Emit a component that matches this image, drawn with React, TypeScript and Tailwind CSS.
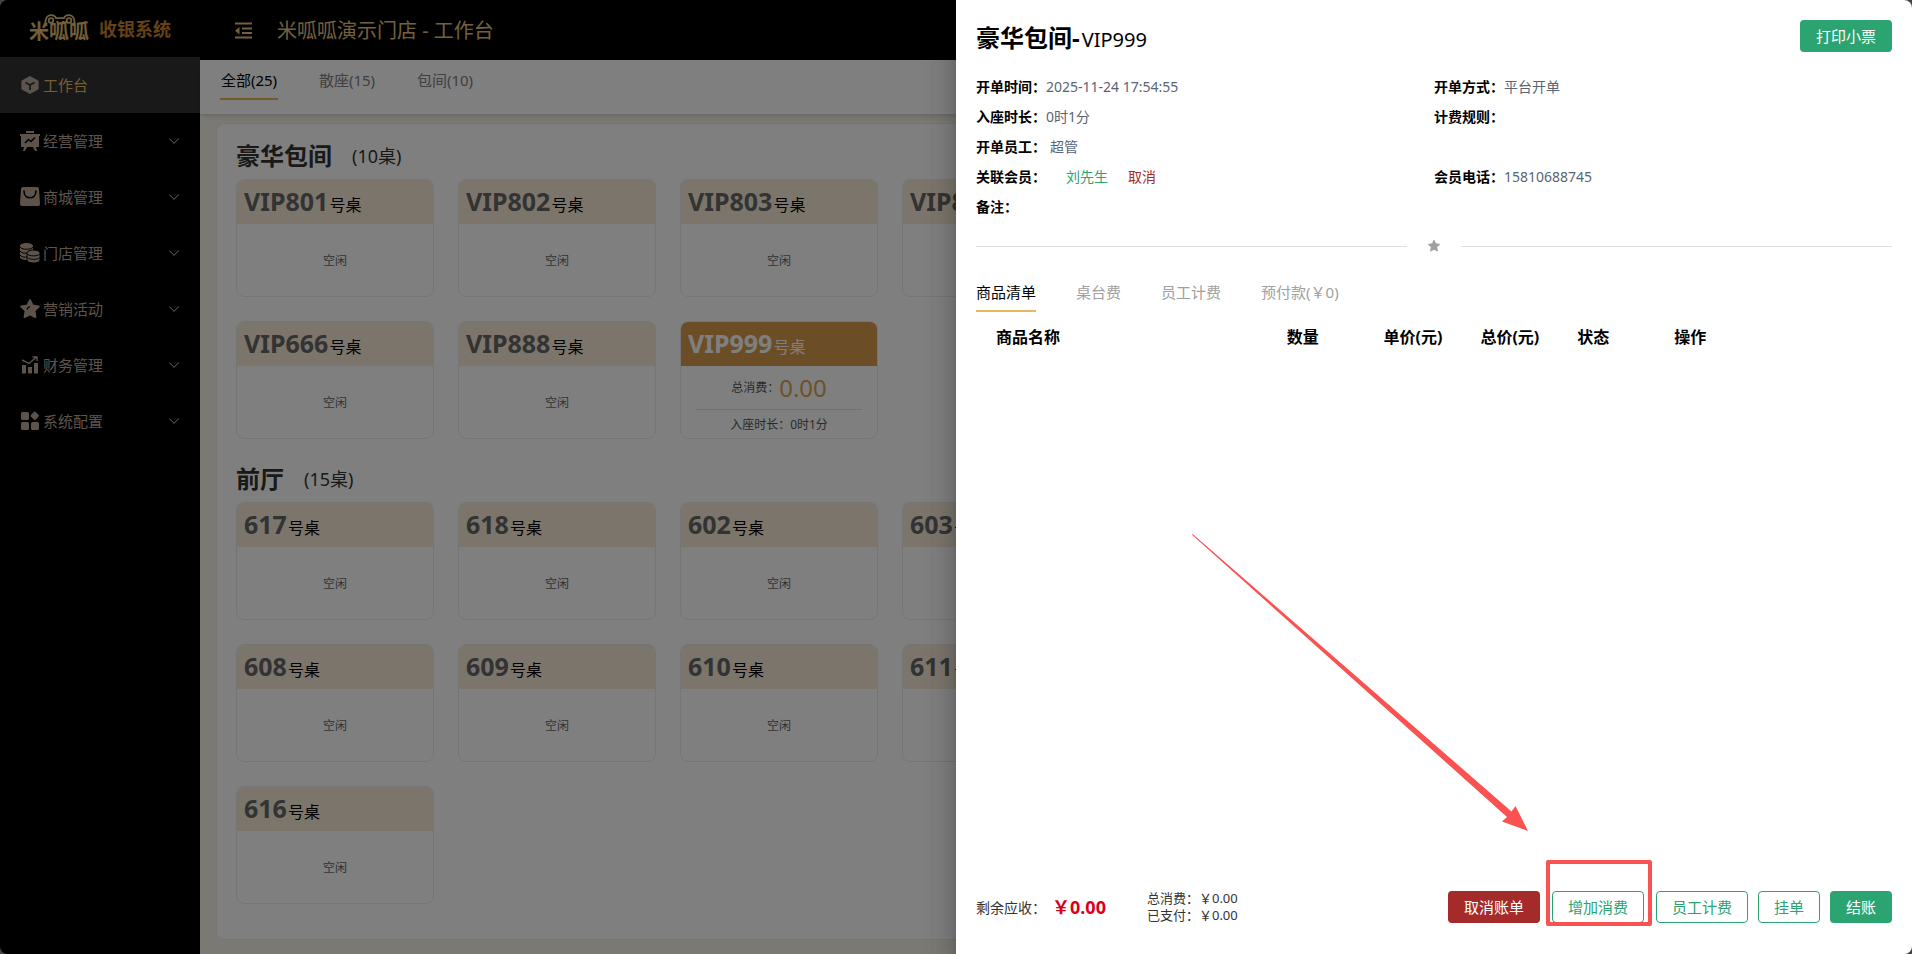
import React from 'react';
import { ChevronDown } from 'lucide-react';

interface Table {
  name: string;
  amount?: string;
  duration?: string;
}

interface Area {
  title: string;
  tables: Table[];
}

const areas: Area[] = [
  {
    title: '豪华包间',
    tables: [
      { name: 'VIP801' },
      { name: 'VIP802' },
      { name: 'VIP803' },
      { name: 'VIP805' },
      { name: 'VIP806' },
      { name: 'VIP807' },
      { name: 'VIP808' },
      { name: 'VIP666' },
      { name: 'VIP888' },
      { name: 'VIP999', amount: '0.00', duration: '0时1分' },
    ],
  },
  {
    title: '前厅',
    tables: [
      '617', '618', '602', '603', '604', '605', '606',
      '608', '609', '610', '611', '612', '613', '615',
      '616',
    ].map((name) => ({ name })),
  },
];

const icons: Record<string, React.ReactNode> = {
  desk: (
    <>
      <path d="M10 1 17.8 5.2a1.6 1.6 0 0 1 .8 1.4v6.8a1.6 1.6 0 0 1-.8 1.4L10 19l-7.8-4.2a1.6 1.6 0 0 1-.8-1.4V6.600a1.600 1.600 0 0 1 .8-1.400z" />
      <path d="M5.500 7.500 10 10l4.500-2.500M10 10v5" stroke="#333" strokeWidth="1.800" fill="none" />
    </>
  ),
  board: (
    <>
      <path d="M6 0h8v2H6zM0 3h20v2h-1v11H1V5H0zM4 16h3l-2 4H3zM13 16h3l1 4h-2z" />
      <path d="m5 12 3.500-3.500 2.500 2L15 6.500" stroke="#000" strokeWidth="1.600" fill="none" />
    </>
  ),
  bag: (
    <>
      <path d="M3 0h14a2 2 0 0 1 2 2l1 15a2 2 0 0 1-2 2H2a2 2 0 0 1-2-2L1 2a2 2 0 0 1 2-2z" />
      <path d="M4 4c0 9 12 9 12 0" stroke="#000" strokeWidth="1.600" fill="none" strokeLinecap="round" />
    </>
  ),
  coins: (
    <>
      <path d="M0 3c0-4 13-4 13 0v11c0 4-13 4-13 0z" />
      <path d="M0 4c1 3 12 3 13 0M0 8c1 2 5 2.500 7 2M0 12c1 2 5 2.500 7 2" stroke="#000" strokeWidth="1" fill="none" />
      <path d="M7 10c0-4 13-4 13 0v7c0 4-13 4-13 0z" stroke="#000" strokeWidth="1" />
      <path d="M7.500 11c1 2.500 11 2.500 12 0M7.500 14.500c1 2.500 11 2.500 12 0" stroke="#000" strokeWidth="1" fill="none" />
    </>
  ),
  star: (
    <>
      <path
        d="m10 1.200 2.700 5.400 6 .9-4.300 4.300 1 6.200-5.400-2.600L4.600 18l1-6.200L1.300 7.500l6-.9z"
        stroke="currentColor"
        strokeWidth="2"
        strokeLinejoin="round"
      />
      <path d="M7 10.500c.5-1.800 1.500-2.500 3-3" stroke="#000" strokeWidth="1.200" fill="none" />
    </>
  ),
  finance: (
    <>
      <path d="M2 10h4v8.500H2zM8 12h4v6.500H8zM14 8h4v10.500h-4z" />
      <path d="m2 5 7 3.500 7-6M12.500 2H17v4" stroke="currentColor" strokeWidth="1.400" fill="none" />
    </>
  ),
  config: (
    <>
      <rect x="1" y="1" width="8" height="8" rx="1.500" />
      <rect x="1" y="11" width="8" height="8" rx="1.500" />
      <rect x="11" y="11" width="8" height="8" rx="1.500" />
      <rect x="11.500" y="1.500" width="6.500" height="6.500" rx="1" transform="rotate(45 14.750 4.750)" />
    </>
  ),
};

const menu = [
  { label: '工作台', icon: 'desk', active: true },
  { label: '经营管理', icon: 'board' },
  { label: '商城管理', icon: 'bag' },
  { label: '门店管理', icon: 'coins' },
  { label: '营销活动', icon: 'star' },
  { label: '财务管理', icon: 'finance' },
  { label: '系统配置', icon: 'config' },
];

const Logo: React.FC = () => (
  <div className="relative ml-[29px] h-[30px] w-[62px] text-[#e0bf74]">
    <span className="block pt-[7px] text-[20px] leading-[22px] font-bold whitespace-nowrap">米呱呱</span>
    <svg
      className="absolute top-0 left-[14px]"
      width="36"
      height="12"
      viewBox="0 0 36 12"
      fill="none"
      stroke="currentColor"
      strokeWidth="1.800"
      aria-hidden="true"
    >
      <path d="M4 12C1 8 3 1.200 8 1.200c3 0 4.500 1.500 5 3h8c.5-1.500 2-3 5-3 5 0 7 6.800 4 10.800" />
      <circle cx="8" cy="6.500" r="2.300" />
      <circle cx="26" cy="6.500" r="2.300" />
      <path d="M13.500 8h2M19 8h2" />
    </svg>
  </div>
);

const Sidebar: React.FC = () => (
  <aside className="w-[200px] shrink-0 bg-black">
    <div className="flex h-[57px] items-center">
      <Logo />
      <span className="ml-2 text-[18px] leading-6 font-bold text-[#c9832f]">收银系统</span>
    </div>
    <nav>
      {menu.map((item) => (
        <a
          key={item.label}
          href="#"
          className={`flex h-14 items-center pr-[17px] pl-5 text-[15px] ${
            item.active ? 'bg-[#333] text-[#e6bf69]' : 'text-[#bca697]'
          }`}
        >
          <svg width="20" height="20" viewBox="0 0 20 20" fill="currentColor" className="mr-[3px] text-[#bca697]" aria-hidden="true">
            {icons[item.icon]}
          </svg>
          <span className="flex-1">{item.label}</span>
          {!item.active && <ChevronDown size={18} strokeWidth={1.4} />}
        </a>
      ))}
    </nav>
  </aside>
);

const TableCard: React.FC<{ table: Table }> = ({ table }) => {
  const busy = table.amount !== undefined;
  return (
    <div className="flex h-[118px] flex-col overflow-hidden rounded-lg border border-[#ebebeb]">
      <div
        className={`flex h-11 items-baseline px-[7px] leading-[42px] ${
          busy ? 'bg-[#d99c4c] text-white' : 'bg-[#f6ebd8] text-black'
        }`}
      >
        <span className={`text-[25px] font-bold ${busy ? 'text-white' : 'text-[#666]'}`}>{table.name}</span>
        <span className="ml-px text-[16px]">号桌</span>
      </div>
      {busy ? (
        <div className="flex flex-1 flex-col px-[15px] text-[12px] text-[#555]">
          <div className="flex h-11 items-center justify-center border-b border-[#e5e5e5]">
            总消费：<span className="text-[24px] text-[#e0a04a]">{table.amount}</span>
          </div>
          <div className="flex flex-1 items-center justify-center pt-px">入座时长：{table.duration}</div>
        </div>
      ) : (
        <div className="flex flex-1 items-center justify-center pt-0.5 text-[12px] text-[#666]">空闲</div>
      )}
    </div>
  );
};

const Workbench: React.FC = () => (
  <div className="flex min-w-0 flex-1 flex-col bg-[#f5f3e8]">
    <header className="flex h-[60px] shrink-0 items-center bg-black pl-[35px] text-[#e6c07c]">
      <button type="button" aria-label="收起菜单">
        <svg width="17" height="17" viewBox="0 0 17 17" fill="none" stroke="currentColor" strokeWidth="2">
          <path d="M0 1.500h17M7 6.500h10M7 11h10M0 15.500h17" />
          <path d="M0 8.700 4.500 5v7.500z" fill="currentColor" stroke="none" />
        </svg>
      </button>
      <h1 className="ml-[25px] pt-0.5 text-[20px]">米呱呱演示门店 - 工作台</h1>
    </header>
    <div className="flex h-[54px] shrink-0 gap-10 bg-white pl-5 text-[15px] text-[#808080] shadow-md">
      <button type="button" className="h-10 min-w-[58px] border-b-2 border-[#e6b450] pt-0.5 text-black">
        全部(25)
      </button>
      <button type="button" className="h-10 min-w-[58px] border-b-2 border-transparent pt-0.5">
        散座(15)
      </button>
      <button type="button" className="h-10 min-w-[58px] border-b-2 border-transparent pt-0.5">
        包间(10)
      </button>
    </div>
    <main className="mt-[9px] mr-4 mb-[14px] ml-4 flex-1 rounded-lg border border-[#ebebe6] bg-white px-[19px] pt-[9px]">
      {areas.map((area) => (
        <section key={area.title} className="mb-[17px]">
          <div className="flex h-[46px] items-center gap-5 text-[#333]">
            <h2 className="text-[24px] font-bold">{area.title}</h2>
            <span className="text-[18px]">({area.tables.length}桌)</span>
          </div>
          <div className="grid grid-cols-[repeat(auto-fill,198px)] gap-6">
            {area.tables.map((table) => (
              <TableCard key={table.name} table={table} />
            ))}
          </div>
        </section>
      ))}
    </main>
  </div>
);

const Field: React.FC<{ label: string; children?: React.ReactNode }> = ({ label, children }) => (
  <div className="flex h-[30px] items-center text-[14px] text-[#5a6475]">
    <span className="font-bold text-black">{label}：</span>
    {children}
  </div>
);

const outlineButton =
  'h-8 rounded border border-[#2ba471] bg-white px-[15px] text-[15px] text-[#2ba471] whitespace-nowrap';

const OrderDrawer: React.FC = () => (
  <aside className="absolute inset-y-0 right-0 flex w-1/2 flex-col bg-white px-5 shadow-[0_8px_10px_-5px_rgba(0,0,0,0.2),0_16px_24px_2px_rgba(0,0,0,0.14),0_6px_30px_5px_rgba(0,0,0,0.12)]">
    <div className="flex items-start justify-between pt-5 pb-[19px]">
      <h2 className="flex h-8 items-baseline gap-[2px] text-[24px] leading-9 text-black">
        <b>豪华包间-</b>
        <span className="text-[20px]">VIP999</span>
      </h2>
      <button type="button" className="h-8 rounded bg-[#2ba471] px-4 text-[15px] text-white">
        打印小票
      </button>
    </div>

    <div className="grid grid-cols-2">
      <Field label="开单时间">2025-11-24 17:54:55</Field>
      <Field label="开单方式">平台开单</Field>
      <Field label="入座时长">0时1分</Field>
      <Field label="计费规则" />
      <div className="col-span-2">
        <Field label="开单员工">
          <span className="ml-1">超管</span>
        </Field>
      </div>
      <Field label="关联会员">
        <a href="#" className="ml-5 text-[#2ba471]">刘先生</a>
        <a href="#" className="ml-5 text-[#a52a2a]">取消</a>
      </Field>
      <Field label="会员电话">15810688745</Field>
      <Field label="备注" />
    </div>

    <div className="mt-[17px] flex h-[16px] items-center gap-5">
      <span className="h-px flex-1 bg-[#dcdfe6]" />
      <svg width="14" height="14" viewBox="0 0 14 14" fill="#a0a0a0" stroke="#a0a0a0" strokeLinejoin="round" aria-hidden="true">
        <path d="m7 1.300 1.700 3.500 3.900.5-2.900 2.800.7 4L7 10.200l-3.400 1.900.7-4-2.900-2.800 3.900-.5z" />
      </svg>
      <span className="h-px flex-1 bg-[#dcdfe6]" />
    </div>

    <div className="mt-[18px] flex gap-10 text-[15px] text-[#a0a0a0]">
      <button type="button" className="h-10 border-b-2 border-[#e6b95f] pt-0.5 text-black">
        商品清单
      </button>
      <button type="button" className="h-10 border-b-2 border-transparent pt-0.5">桌台费</button>
      <button type="button" className="h-10 border-b-2 border-transparent pt-0.5">员工计费</button>
      <button type="button" className="h-10 border-b-2 border-transparent pt-0.5">预付款(￥0)</button>
    </div>

    <div className="flex-1 pr-6 pl-5">
      <table className="mt-[13px] w-full table-fixed text-left text-[16px] text-black">
        <thead>
          <tr className="h-6 leading-6">
            <th className="w-3/9">商品名称</th>
            <th className="w-1/9">数量</th>
            <th className="w-1/9">单价(元)</th>
            <th className="w-1/9">总价(元)</th>
            <th className="w-1/9">状态</th>
            <th className="w-2/9">操作</th>
          </tr>
        </thead>
      </table>
    </div>

    <div className="mb-[31px] flex h-8 items-center text-[#333]">
      <span className="text-[14px]">剩余应收：</span>
      <span className="ml-[6px] text-[18px] font-bold text-[#d9001b]">￥0.00</span>
      <div className="ml-[41px] text-[13px] leading-[17px]">
        <p>总消费：￥0.00</p>
        <p>已支付：￥0.00</p>
      </div>
      <div className="ml-auto flex gap-[10px]">
        <div className="flex gap-3">
          <button type="button" className="h-8 rounded bg-[#a52a2a] px-4 text-[15px] whitespace-nowrap text-white">
            取消账单
          </button>
          <div className="relative">
            <button type="button" className={outlineButton}>增加消费</button>
            <div className="pointer-events-none absolute -top-[31px] -right-[8px] -bottom-[3px] -left-[6px] rounded-xs border-4 border-[#fa5151]" />
          </div>
          <button type="button" className={outlineButton}>员工计费</button>
        </div>
        <button type="button" className={outlineButton}>挂单</button>
        <button type="button" className="h-8 rounded bg-[#2ba471] px-4 text-[15px] whitespace-nowrap text-white">
          结账
        </button>
      </div>
    </div>

    {/* pointer towards the highlighted button */}
    <svg
      className="pointer-events-none absolute right-[384px] bottom-[123px]"
      width="336"
      height="297"
      viewBox="0 0 336 297"
      fill="#fa5151"
      aria-hidden="true"
    >
      <path d="M.6 0 319.500 277.500 323.500 272 336 297 310 287.500 315 283 0 .8z" />
    </svg>
  </aside>
);

export default function App() {
  return (
    <div className="h-screen bg-[#444] font-['Noto_Sans','Noto_Sans_CJK_SC',sans-serif]">
      <div className="relative flex h-full overflow-hidden rounded-lg">
        <Sidebar />
        <Workbench />
        <div className="absolute inset-0 bg-black/50" />
        <OrderDrawer />
      </div>
    </div>
  );
}
